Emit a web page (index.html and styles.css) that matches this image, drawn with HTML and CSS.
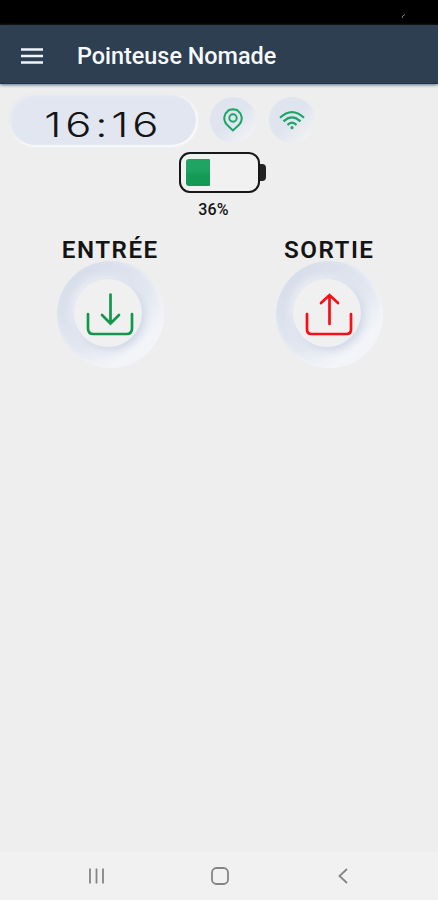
FILE: index.html
```
<!DOCTYPE html>
<html lang="fr">
<head>
    <meta charset="UTF-8">
    <meta name="viewport" content="width=device-width, initial-scale=1.0">
    <title>Pointeuse Nomade</title>
    <link rel="stylesheet" href="styles.css">
</head>
<body>
    <div class="status-bar">
        <svg width="6" height="6" viewBox="0 0 6 6"><path d="M1.5 5 V3 L4 1.5" fill="none" stroke="#777"/></svg>
    </div>

    <header class="app-bar">
        <svg class="menu" width="22" height="16" viewBox="0 0 22 16">
            <path d="M0 1.5h22M0 8h22M0 14.5h22" stroke="#f0f3fa" stroke-width="2.5"/>
        </svg>
        <h1>Pointeuse Nomade</h1>
    </header>

    <main>
        <div class="infos">
            <div class="horloge"><span>16:16</span></div>
            <div class="pastille">
                <!-- position -->
                <svg width="20" height="24" viewBox="0 0 20 24" fill="none" stroke="#1ba567" stroke-width="1.9">
                    <path d="M10 22.5 L4 16.8 Q1.200 14 1.200 9.700 L2.500 5.500 L6 2 L10 1.200 L14 2 L17.500 5.500 L18.800 9.700 Q18.800 14 16 16.800z"/>
                    <circle cx="10" cy="10" r="3.700"/>
                </svg>
            </div>
            <div class="pastille">
                <svg width="26" height="20" viewBox="0 0 26 20" fill="none" stroke="#1ba567" stroke-width="2.2">
                    <path d="M1 7.800 Q13 -3.600 25 7.800M4.500 11.400 Q13 3.200 21.500 11.400M8.500 15 Q13 10.200 17.500 15"/>
                    <circle cx="13" cy="17.700" r="1.600" fill="#1ba567" stroke="none"/>
                </svg>
            </div>
        </div>

        <div class="batterie">
            <div class="batterie-icone">
                <div class="corps"><div class="niveau"></div></div>
                <div class="borne"></div>
            </div>
            <p>36%</p>
        </div>

        <div class="actions">
            <div class="action">
                <h2>ENTRÉE</h2>
                <div class="bouton">
                    <div class="creux">
                        <svg class="entree" width="48" height="44" viewBox="0 0 48 44">
                            <path d="M2 21v14.500q0 5.500 5.500 5.500h33q5.500 0 5.500-5.500V21M24.500 1.500v29M16 22l8.500 8.500 8.500-8.500"/>
                        </svg>
                    </div>
                </div>
            </div>
            <div class="action">
                <h2>SORTIE</h2>
                <div class="bouton">
                    <div class="creux">
                        <svg class="sortie" width="48" height="44" viewBox="0 0 48 44">
                            <path d="M2 21v15.500q0 4.500 4.500 4.500h35q4.500 0 4.500-4.500V21M24.500 31v-29M16 10l8.500-8 8.500 8"/>
                        </svg>
                    </div>
                </div>
            </div>
        </div>
    </main>

    <nav class="nav-bar">
        <svg width="18" height="18" viewBox="0 0 18 18"><path d="M2 1.500v15M8.500 1.500v15M15 1.500v15"/></svg>
        <svg width="20" height="20" viewBox="0 0 20 20"><rect x="2" y="2" width="16" height="16" rx="4.500"/></svg>
        <svg width="18" height="18" viewBox="0 0 18 18"><path d="M13 2L5.500 9l7.500 7"/></svg>
    </nav>
</body>
</html>
```
FILE: styles.css
```
* {
    box-sizing: border-box;
}

body {
    margin: 0;
    height: 100vh;
    display: flex;
    flex-direction: column;
    background: #eeeeee;
    color: #141414;
    font-family: Roboto, sans-serif;
    overflow: hidden;
}

h1, h2, p {
    margin: 0;
}

svg {
    display: block;
    flex: none;
}

.status-bar {
    height: 25px;
    background: #000;
    padding: 13px 31px 0 0;
    display: flex;
    justify-content: flex-end;
}

.app-bar {
    height: 59px;
    display: flex;
    align-items: center;
    gap: 34px;
    padding: 3px 20px 0 21px;
    background: #2d3f50;
    border-bottom: 1px solid #1c3550;
    box-shadow: 0 1px 3px #5c6c7e;
}

.app-bar h1 {
    color: #f7faff;
    font-size: 23.4px;
    font-weight: 500;
    line-height: 28px;
}

main {
    flex: 1;
}

.infos {
    display: flex;
    align-items: center;
    padding: 11px 0 0 10px;
}

/* Boutons en relief */
.horloge {
    width: 186px;
    height: 50px;
    border-radius: 25px;
    display: flex;
    align-items: center;
    justify-content: center;
    background: #e1e6f0;
    box-shadow: inset 1px 1px 3px #e9ebf0, 1px 1px 2px 1px #f9fafc, -1px -1px 3px #e6e8ed;
}

.horloge span {
    font-family: Inter, sans-serif;
    font-size: 34px;
    font-weight: 300;
    line-height: 40px;
    letter-spacing: 3px;
    transform: scaleX(1.28);
    padding: 9px 0 0 1px;
}

.pastille {
    width: 46px;
    height: 46px;
    margin-left: 14px;
    border-radius: 50%;
    display: flex;
    align-items: center;
    justify-content: center;
    background: linear-gradient(135deg, #dfe4ef 50%, #f0f1f4 85%);
}

.pastille + .pastille {
    margin-left: 13px;
}

.batterie {
    display: flex;
    flex-direction: column;
    align-items: center;
    padding: 7px 0 0 7px;
}

.batterie-icone {
    display: flex;
    align-items: center;
}

.corps {
    width: 81px;
    height: 41px;
    padding: 5px;
    border: 2px solid #171717;
    border-radius: 11px;
    background: #f1f1f1;
}

.niveau {
    width: 24px;
    height: 27px;
    border-radius: 3px 1px 1px 3px;
    background: linear-gradient(#20a463 40%, #149a55 60%);
}

.borne {
    width: 6px;
    height: 17px;
    border-radius: 0 4px 4px 0;
    background: #222;
}

.batterie p {
    margin: 7px 18px 0 0;
    font-size: 16px;
    font-weight: 500;
    line-height: 19px;
    letter-spacing: .2px;
}

.actions {
    display: grid;
    grid-template-columns: 1fr 1fr;
    padding: 17px 0 0 1px;
}

.action {
    display: flex;
    flex-direction: column;
    align-items: center;
}

.action + .action {
    padding-left: 1px;
}

.action h2 {
    font-size: 24.200px;
    font-weight: 600;
    line-height: 28px;
    letter-spacing: 1.500px;
}

.bouton {
    width: 107px;
    height: 107px;
    margin-top: -3px;
    border-radius: 50%;
    display: flex;
    align-items: center;
    justify-content: center;
    background: linear-gradient(140deg, #d6ddea 12%, #e3e7f0 55%, #f3f5f9 78%, #f0f1f3);
    box-shadow: inset -3px -3px 6px #f3f4f7;
}

.creux {
    width: 68px;
    height: 68px;
    margin: 0 4px 3px 0;
    border-radius: 50%;
    display: flex;
    align-items: center;
    justify-content: center;
    background: #f0f0f1;
    box-shadow: 3px 3px 9px #ced6e6, -3px -3px 7px #eceff5;
}

.creux svg {
    margin: 4px 0 0 4px;
}

.bouton path {
    fill: none;
    stroke-width: 2.700;
    stroke-linecap: round;
}

.entree {
    stroke: #13974c;
}

.sortie {
    stroke: #fa0d14;
}

.nav-bar {
    height: 48px;
    display: flex;
    justify-content: space-between;
    align-items: center;
    padding: 0 86px 0 88px;
    background: #f1f1f1;
}

.nav-bar svg {
    fill: none;
    stroke: #858585;
    stroke-width: 1.800;
}
```
